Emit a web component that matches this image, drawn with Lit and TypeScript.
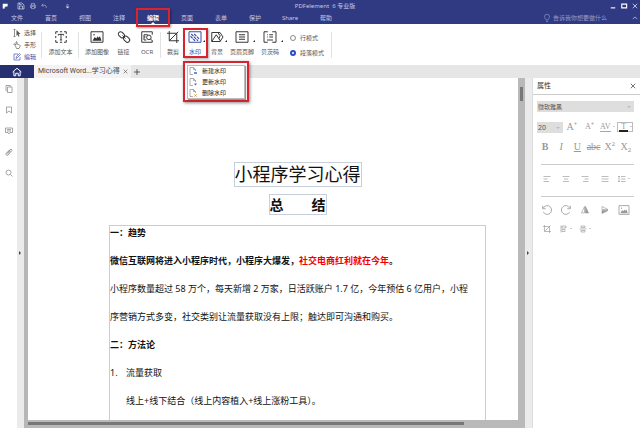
import { LitElement, html, css, svg, nothing, type TemplateResult } from "lit";
import { customElement, state } from "lit/decorators.js";
import { classMap } from "lit/directives/class-map.js";

const glyphs: Record<string, TemplateResult> = {
  logo: svg`<path d="M2 2h13v7H9v2H2z" fill="currentColor" stroke="none"/><path d="M2 10h5v5H2z" fill="currentColor" stroke="none"/>`,
  save: svg`<path d="M2 2h8l4 4v8H2zM5 14V8h6v6M5 2v3h4"/>`,
  print: svg`<path d="M4 6V1h8v5M4 12H1V6h14v6h-3M4 9h8v6H4z"/>`,
  undo: svg`<path d="M6 2 2 6l4 4M2 6h9q4 1 3 7"/>`,
  caret: svg`<path d="M4 3h8" stroke-width="2"/><path d="M2 8h12l-6 6z" fill="currentColor" stroke="none"/>`,
  min: svg`<path d="M2 13h12" stroke-width="3"/>`,
  max: svg`<path d="M2 3h13v10H2z" stroke-width="3"/>`,
  close: svg`<path d="m2 2 12 12M14 2 2 14" stroke-width="1.800"/>`,
  bulb: svg`<path d="M6 12c0-3-3-3-3-6.500a5 5 0 0 1 10 0c0 3.500-3 3.500-3 6.500zM6 15h4"/>`,
  up: svg`<path d="m2 11 6-6 6 6" stroke-width="2"/>`,
  select: svg`<path d="M3 1v14M1 1h4M1 15h4"/><path d="m7 2 8 8-4 .5 2 4-2 1-2-4-2 2.500z" fill="currentColor" stroke="none"/>`,
  hand: svg`<path d="M5 10 2 7q-1-2 1-1l3 2V2q1-2 2 0v4l5 2q2 1 1 3l-2 4H7z"/>`,
  edit: svg`<path d="M10 2H2v12h12V8"/><path d="m6 11 1-4 6-6 2 2-6 6z"/>`,
  text: svg`<path d="M1 1h3M1 1v3M15 1h-3M15 1v3M1 15h3M1 15v-3M15 15h-3M15 15v-3M6.500 1h3M6.500 15h3M1 6.500v3M15 6.500v3"/><path d="M4.500 6V4.500h7V6M8 4.500v7.500M6.500 12h3"/>`,
  image: svg`<path d="M0 1h16v14H0z"/><path d="m2 13 3-5 2 2 2-3 1 2 2-2 2 6z" fill="currentColor" stroke="none"/><circle cx="4" cy="5" r="1" fill="currentColor" stroke="none"/>`,
  link: svg`<rect x="0" y="2" width="9" height="6" rx="3" transform="rotate(45 4.500 5)"/><rect x="7" y="8" width="9" height="6" rx="3" transform="rotate(45 11.500 11)"/><path d="m6 6 4 4"/>`,
  ocr: svg`<path d="M15 5V1H1v14h14v-2M4 5h5M4 5v7h3M4 8h2"/><circle cx="10.500" cy="8.500" r="3"/><path d="m12.500 10.500 3 3"/>`,
  crop: svg`<path d="M3 0v13h13M0 3h13v13M15 1 3 13"/>`,
  watermark: svg`<path d="M0 1h16v14H0z"/><path d="m3 4 9 9M7 4l7 7M2 7l6 6" stroke-width="1.500" stroke-dasharray="4 1"/>`,
  background: svg`<path d="M1 2h11l4 6-4 6H1z"/><path d="m1 14 6-9 6 9M9 2q5 4 2 8"/>`,
  header: svg`<path d="M0 1h16v14H0z"/><path d="M4 5h8M4 8h8M4 11h8" stroke-width="1.500"/>`,
  bates: svg`<path d="M5 1H0v14h5M11 1h5v14h-5M7 5h5M4 5h1M4 8h1M7 8h5M4 12h8"/>`,
  home: svg`<path d="m1 8 7-6 7 6M3 7v7h3v-4h4v4h3V7" stroke-width="1.600"/>`,
  plus: svg`<path d="M8 0v16M0 8h16" stroke-width="2"/>`,
  pages: svg`<path d="M5 4h9v11H5zM3 12H2V1h9v2"/>`,
  bookmark: svg`<path d="M3 2h10v12l-5-4-5 4z"/>`,
  comment: svg`<path d="M1 2h14v9h-5l-2 3-2-3H1zM4 5h8M4 8h8"/>`,
  clip: svg`<path d="m4 11 7-8q2-1 3 1 0 1-1 2l-7 8q-3 2-4-1 0-2 1-3l7-7M6 11l5-5" stroke-width="1.500"/>`,
  search: svg`<circle cx="7" cy="7" r="5"/><path d="m11 11 4 4"/>`,
  spacing: svg`<path d="M2 2v12M0 4l2-2 2 2M0 12l2 2 2-2M6 3h9M6 8h9M6 13h9"/>`,
  left: svg`<path d="M1 3h14M1 8h8M1 13h11"/>`,
  center: svg`<path d="M1 3h14M4 8h8M2 13h12"/>`,
  right: svg`<path d="M1 3h14M7 8h8M4 13h11"/>`,
  justify: svg`<path d="M1 3h14M1 8h14M1 13h14"/>`,
  ccw: svg`<path d="M2 5a7 7 0 1 1 0 6M1 1v5h5"/>`,
  cw: svg`<path d="M14 5a7 7 0 1 0 0 6M15 1v5h-5"/>`,
  flipH: svg`<path d="M7 1v13H1z"/><path d="M9 1v13h6z" fill="currentColor"/>`,
  flipV: svg`<path d="M2 7V1l12 6z"/><path d="M2 9v6l12-6z" fill="currentColor"/>`,
  alignObj: svg`<path d="M2 1v14M4 2h8v4H4zM4 9h6v4H4z"/>`,
  distribute: svg`<path d="M1 8h14M4 2h8v3H4zM4 11h8v3H4z"/>`,
  docNew: svg`<path d="M13 8V5L9 1H2v14h6M9 1v4h4"/><path d="M10 12h6" stroke="#2c6fd6" stroke-width="3"/>`,
  docUpdate: svg`<path d="M13 8V5L9 1H2v14h6M9 1v4h4"/><path d="M10 11h6l-3 4z" fill="#2c6fd6" stroke="none"/>`,
  docDelete: svg`<path d="M13 8V5L9 1H2v14h6M9 1v4h4"/><path d="m11 11 4 4M15 11l-4 4" stroke="#e0872c" stroke-width="2"/>`,
};

const icon = (name: string, size = "s8") =>
  html`<svg class="icon ${size}" viewBox="0 0 16 16" aria-hidden="true">${glyphs[name]}</svg>`;

const base = css`
  * { box-sizing: border-box; }
  button, input, select {
    font: inherit; color: inherit; background: none; border: 0; margin: 0; padding: 0;
    appearance: none; outline: none; border-radius: 0;
  }
  button { display: flex; align-items: center; justify-content: center; white-space: nowrap; }
  .icon { display: block; flex: none; fill: none; stroke: currentColor; stroke-width: 1.3; overflow: visible; }
  .s5 { width: 5px; height: 5px; }
  .s6 { width: 6px; height: 6px; }
  .s8 { width: 8px; height: 8px; }
  .s10 { width: 10px; height: 10px; }
  .s12 { width: 12px; height: 12px; }
`;

@customElement("app-header")
export class AppHeader extends LitElement {
  static styles = [base, css`
    :host { display: block; background: #303a82; color: #c3c8e6; line-height: 12px; }
    .title { display: grid; grid-template-columns: 1fr auto 1fr; height: 12px; align-items: center; padding-left: 10px; }
    .quick { display: flex; align-items: center; gap: 5px; margin-left: -8px; color: #dfe2f3; }
    .logo { color: #fff; margin-right: 4px; }
    .more { margin-left: 13px; }
    .window { display: flex; justify-content: flex-end; gap: 5px; padding-right: 2px; color: #fff; }
    .menu { display: flex; height: 12px; align-items: center; }
    .tab { position: relative; width: 34px; height: 12px; }
    .wide { width: 36px; }
    .active { color: #fff; font-weight: 700; }
    .active::after {
      content: ""; position: absolute; left: 15px; bottom: 0;
      border: 2px solid transparent; border-top: 0; border-bottom-color: #fff;
    }
    .active::before {
      content: ""; position: absolute; inset: -4px 0 -3px; border: 2px solid #d9232e;
      box-shadow: 1px 1px 2px #0006; z-index: 2;
    }
    .tell { display: flex; align-items: center; gap: 2px; margin-left: auto; color: #949bc9; }
    .tell input { width: 79px; }
    .tell input::placeholder { color: #949bc9; opacity: 1; }
    .fold { margin-right: 2px; }
  `];

  render() {
    const tabs = ["文件", "首页", "视图", "注释", "编辑", "页面", "表单", "保护", "Share", "帮助"];
    return html`
      <div class="title">
        <div class="quick">
          <span class="logo">${icon("logo", "s6")}</span>
          <button aria-label="保存">${icon("save", "s8")}</button>
          <button aria-label="打印">${icon("print", "s6")}</button>
          <button aria-label="撤销">${icon("undo", "s6")}</button>
          <button class="more" aria-label="更多">${icon("caret", "s5")}</button>
        </div>
        <span>PDFelement&nbsp; 6 专业版</span>
        <div class="window">
          <button aria-label="最小化">${icon("min", "s6")}</button>
          <button aria-label="最大化">${icon("max", "s6")}</button>
          <button aria-label="关闭">${icon("close", "s6")}</button>
        </div>
      </div>
      <nav class="menu">
        ${tabs.map((t, i) => html`<button class=${classMap({ tab: true, wide: i > 7, active: t === "编辑" })}>${t}</button>`)}
        <label class="tell">${icon("bulb")}<input aria-label="搜索功能" placeholder="告诉我你想要做什么"></label>
        <button class="fold" aria-label="收起">${icon("up", "s6")}</button>
      </nav>`;
  }
}

@customElement("app-ribbon")
export class AppRibbon extends LitElement {
  static styles = [base, css`
    :host { display: flex; height: 41px; background: #fff; color: #555; line-height: 8px; }
    .modes { display: flex; flex-direction: column; gap: 4px; padding: 5px 5px 0 13px; }
    .mode { gap: 3px; height: 8px; }
    .on { color: #3448a8; }
    .sep { width: 1px; margin: 8px 0 7px; background: #e2e2e2; }
    .group { display: flex; padding: 0 2px 0 4px; }
    .first { padding: 0 5px 0 6px; }
    .last { padding-left: 1px; }
    .tool { position: relative; flex-direction: column; gap: 5px; height: 33px; width: 25px; padding-top: 7px; justify-content: flex-start; }
    .tool.narrow { width: 22px; }
    .tool.wide { width: 28px; }
    .icon.s12 { color: #333; }
    .on .icon { color: #3448a8; }
    .drop::after {
      content: ""; position: absolute; right: 1px; top: 16px;
      border: 1px solid transparent; border-right-color: #222; border-bottom-color: #222;
    }
    .anchor { position: relative; }
    .anchor::after {
      content: ""; position: absolute; inset: 4px -2px 7px -1px; border: 2px solid #d9232e;
      box-shadow: 1px 1px 2px #0005; pointer-events: none;
    }
    .menu {
      position: absolute; left: -1px; top: 37px; z-index: 5; width: 66px; height: 41px; padding: 2px;
      border: 2px solid #d9232e; background: #fff; box-shadow: 1px 1px 3px #0007;
    }
    .list { height: 34px; border: 1px solid #bbb; box-shadow: 1px 1px 1px #0006; color: #222; }
    .item { width: 100%; height: 10px; justify-content: flex-start; gap: 5px; padding-left: 1px; }
    .item + .item { margin-top: 1px; }
    .item .icon { color: #7d8294; }
    .paragraph { display: flex; flex-direction: column; gap: 7px; padding: 10px 7px 0 4px; }
    .choice { display: flex; align-items: center; gap: 4px; height: 8px; white-space: nowrap; }
    .choice input { width: 6px; height: 6px; border: 1px solid #8a8a8a; border-radius: 50%; }
    .choice input:checked { border: 2px solid #2c4bc4; }
  `];

  @state() private flow = "段落模式";

  private tool(name: string, label: string, extra: Record<string, boolean> = {}) {
    return html`<button class=${classMap({ tool: true, ...extra })}>${icon(name, "s12")}<span>${label}</span></button>`;
  }

  render() {
    const entries: [string, string][] = [["docNew", "新建水印"], ["docUpdate", "更新水印"], ["docDelete", "删除水印"]];
    return html`
      <div class="modes">
        <button class="mode">${icon("select")}选择</button>
        <button class="mode">${icon("hand")}手形</button>
        <button class="mode on">${icon("edit")}编辑</button>
      </div>
      <div class="sep"></div>
      <div class="group first">${this.tool("text", "添加文本")}</div>
      <div class="sep"></div>
      <div class="group">
        ${this.tool("image", "添加图像", { wide: true })}${this.tool("link", "链接")}${this.tool("ocr", "OCR", { narrow: true })}
      </div>
      <div class="sep"></div>
      <div class="group last">
        ${this.tool("crop", "裁剪", { narrow: true })}
        <div class="anchor">
          ${this.tool("watermark", "水印", { narrow: true, on: true, drop: true })}
          <div class="menu"><div class="list">
            ${entries.map(([g, t]) => html`<button class="item">${icon(g)}${t}</button>`)}
          </div></div>
        </div>
        ${this.tool("background", "背景", { narrow: true, drop: true })}
        ${this.tool("header", "页眉页脚", { wide: true, drop: true })}
        ${this.tool("bates", "贝茨码", { wide: true, drop: true })}
      </div>
      <div class="paragraph">
        ${["行模式", "段落模式"].map((t) => html`<label class="choice">
          <input type="radio" name="flow" .checked=${this.flow === t} @change=${() => (this.flow = t)}>${t}</label>`)}
      </div>
      <div class="sep"></div>`;
  }
}

@customElement("app-properties")
export class AppProperties extends LitElement {
  static styles = [base, css`
    :host { display: block; width: 108px; flex: none; background: #fff; border-left: 1px solid #ddd; color: #999; }
    .head { display: flex; justify-content: space-between; align-items: center; height: 17px; padding: 0 4px; border-bottom: 1px solid #ccc; color: #333; }
    .name { margin: 0; font-size: 7px; font-weight: 400; line-height: 16px; }
    .body { padding: 6px 6px 0 4px; }
    .pick { position: relative; display: block; height: 11px; background: #dedede; color: #555; }
    .pick::after { content: ""; position: absolute; right: 3px; top: 5px; border: 2px solid transparent; border-top-color: #bbb; border-bottom: 0; }
    .pick select { display: block; width: 100%; height: 11px; padding-left: 1px; }
    .row { display: grid; grid-template-columns: repeat(6, 1fr); height: 19px; align-items: center; justify-items: center; }
    .sizes { grid-template-columns: 26px repeat(4, 1fr); margin-top: 5px; height: 20px; }
    .sizes .pick { width: 26px; font-size: 7px; }
    .five { grid-template-columns: repeat(5, 1fr); }
    .serif { font-family: "Liberation Serif", serif; font-size: 10px; line-height: 12px; }
    .small { font-size: 8px; }
    .bold { font-weight: 700; }
    .italic { font-style: italic; }
    .under { text-decoration: underline; }
    .strike { text-decoration: line-through; }
    .mark { font-size: 6px; line-height: 6px; align-self: flex-start; }
    .low { align-self: flex-end; }
    .track { border-bottom: 1px solid #aaa; line-height: 8px; }
    .colour { width: 16px; height: 10px; border: 1px solid #bbb; justify-content: flex-start; padding-left: 1px; line-height: 8px; }
    .ink { border-bottom: 2px solid #222; line-height: 7px; }
    .arrow { margin-left: 2px; border: 1px solid transparent; border-top-color: #999; }
    .rule { height: 1px; margin: 8px 0 4px 4px; background: #ccc; }
    .tight { margin-bottom: 3px; }
  `];

  private btn(label: string, content: unknown, drop = false) {
    return html`<button aria-label=${label}>${content}${drop ? html`<i class="arrow"></i>` : nothing}</button>`;
  }

  render() {
    return html`
      <div class="head"><h2 class="name">属性</h2><button aria-label="关闭属性">${icon("close", "s6")}</button></div>
      <div class="body">
        <label class="pick"><select aria-label="字体"><option>微软雅黑</option></select></label>
        <div class="row sizes">
          <label class="pick"><select aria-label="字号"><option>20</option></select></label>
          ${this.btn("增大字号", html`<span class="serif">A</span><span class="mark">+</span>`)}
          ${this.btn("减小字号", html`<span class="serif small">A</span><span class="mark">+</span>`)}
          ${this.btn("字符间距", html`<span class="serif small track">AV</span>`, true)}
          <button class="colour" aria-label="文字颜色"><span class="serif small ink">&nbsp;T&nbsp;</span><i class="arrow"></i></button>
        </div>
        <div class="row">
          ${this.btn("粗体", html`<span class="serif bold">B</span>`)}
          ${this.btn("斜体", html`<span class="serif italic">I</span>`)}
          ${this.btn("下划线", html`<span class="serif under">U</span>`)}
          ${this.btn("删除线", html`<span class="serif strike">abc</span>`)}
          ${this.btn("上标", html`<span class="serif">X</span><span class="mark">2</span>`)}
          ${this.btn("下标", html`<span class="serif">X</span><span class="mark low">2</span>`)}
        </div>
        <div class="rule"></div>
        <div class="row five">
          ${this.btn("左对齐", icon("left"))}${this.btn("居中", icon("center"))}${this.btn("右对齐", icon("right"))}
          ${this.btn("两端对齐", icon("justify"))}${this.btn("行距", icon("spacing"), true)}
        </div>
        <div class="rule tight"></div>
        <div class="row five">
          ${this.btn("逆时针旋转", icon("ccw", "s10"))}${this.btn("顺时针旋转", icon("cw", "s10"))}
          ${this.btn("水平翻转", icon("flipH"))}${this.btn("垂直翻转", icon("flipV"))}${this.btn("替换图像", icon("image", "s10"))}
        </div>
        <div class="row five">
          ${this.btn("裁剪", icon("crop"))}${this.btn("对齐", icon("alignObj"), true)}${this.btn("分布", icon("distribute"), true)}
        </div>
      </div>`;
  }
}

@customElement("app-document")
export class AppDocument extends LitElement {
  static styles = [base, css`
    :host {
      display: grid; grid-template-columns: 1fr 7px; grid-template-rows: minmax(0, 1fr) 8px; flex: 1; min-width: 0;
      border-left: 4px solid #b6b6b6; background: #b9b9b9; color: #111; font-size: 9px;
    }
    .page {
      display: flex; flex-direction: column; align-items: center; overflow: hidden;
      padding: 84px 32px 0 81px; background: #fff;
    }
    .title, .sub { margin: 0; border: 1px solid #c5d0dc; white-space: pre; }
    .title { font-size: 18px; font-weight: 400; line-height: 23px; }
    .sub { margin-top: 7px; font-size: 14px; font-weight: 700; line-height: 19px; }
    .text { flex: 1 0 auto; width: 100%; margin-top: 10px; border: 1px solid #ccc; border-bottom: 0; line-height: 28px; white-space: nowrap; }
    .text p, .text h3, .text ol { margin: 0; font-size: 9px; }
    .text .lead { line-height: 14px; margin-bottom: 7px; }
    .text .strong { font-weight: 700; }
    .red { color: #f00000; }
    .text .steps { padding-left: 16px; }
    .steps li { list-style: none; counter-increment: step; }
    .steps li::before { content: counter(step) "."; float: left; margin-left: -16px; }
    .vbar { padding: 9px 2px; }
    .vthumb { height: 14px; background: #777; }
    .hbar { padding: 2px 54px 3px 0; }
    .hthumb { height: 3px; background: #777; }
  `];

  render() {
    return html`
      <article class="page">
        <h1 class="title">小程序学习心得</h1>
        <h2 class="sub">总　　结</h2>
        <div class="text">
          <h3 class="lead">一：趋势</h3>
          <p class="strong">微信互联网将进入小程序时代，小程序大爆发，<span class="red">社交电商红利就在今年</span>。</p>
          <p>小程序数量超过 58 万个，每天新增 2 万家，日活跃账户 1.7 亿，今年预估 6 亿用户，小程<br>序营销方式多变，社交类别让流量获取没有上限；触达即可沟通和购买。</p>
          <h3>二：方法论</h3>
          <ol class="steps"><li>流量获取<br>线上+线下结合（线上内容植入+线上涨粉工具）。</li></ol>
        </div>
      </article>
      <div class="vbar"><div class="vthumb"></div></div>
      <div class="hbar"><div class="hthumb"></div></div>`;
  }
}

@customElement("app-root")
export class AppRoot extends LitElement {
  static styles = [base, css`
    :host {
      display: flex; flex-direction: column; height: 100vh; overflow: hidden; background: #fff;
      font-family: "Noto Sans", "Noto Sans CJK SC", sans-serif; font-size: 6px;
    }
    .tabs { display: flex; height: 13px; flex: none; background: #e6e6e6; color: #444; }
    .home { width: 34px; background: #262f70; color: #fff; }
    .file { display: flex; align-items: center; gap: 3px; padding: 0 3px 0 4px; background: #f3f3f3; }
    .label { font-family: Roboto, "Noto Sans CJK SC", sans-serif; font-size: 7px; line-height: 13px; }
    .add { width: 13px; color: #333; }
    .work { display: flex; flex: 1; min-height: 0; }
    .rail { width: 17px; flex: none; color: #777; }
    .rail button { width: 18px; height: 21px; }
    .gutter { display: flex; align-items: center; width: 7px; flex: none; background: #ebebeb; padding-left: 2px; }
    .gutter::after { content: ""; border: 2px solid transparent; border-left-color: #444; border-right: 0; }
  `];

  render() {
    const rail: [string, string][] = [["pages", "缩略图"], ["bookmark", "书签"], ["comment", "注释"], ["clip", "附件"], ["search", "搜索"]];
    return html`
      <app-header></app-header>
      <app-ribbon></app-ribbon>
      <div class="tabs">
        <button class="home" aria-label="主页">${icon("home", "s10")}</button>
        <div class="file"><span class="label">Microsoft Word...学习心得</span><button aria-label="关闭标签">${icon("close", "s5")}</button></div>
        <button class="add" aria-label="新标签">${icon("plus", "s6")}</button>
      </div>
      <main class="work">
        <nav class="rail">${rail.map(([g, l]) => html`<button aria-label=${l}>${icon(g)}</button>`)}</nav>
        <div class="gutter"></div>
        <app-document></app-document>
        <div class="gutter"></div>
        <app-properties></app-properties>
      </main>`;
  }
}
